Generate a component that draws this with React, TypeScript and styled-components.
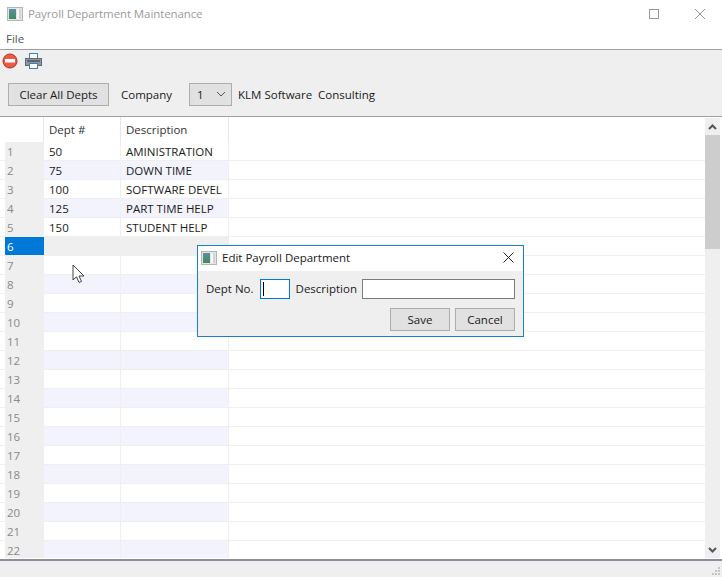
import React from "react";
import styled, { createGlobalStyle } from "styled-components";

const GlobalStyle = createGlobalStyle`
  html, body {
    margin: 0;
    padding: 0;
    background: #fff;
  }
  body {
    font-family: "Open Sans", "Noto Sans", sans-serif;
    font-size: 11.5px;
    color: #1a1a1a;
  }
`;

const Win = styled.div`
  position: relative;
  width: 722px;
  height: 577px;
  display: flex;
  flex-direction: column;
  overflow: hidden;
  background: #fff;
`;

const TitleBar = styled.div`
  height: 30px;
  box-sizing: border-box;
  padding: 0 0 3px 7px;
  display: flex;
  align-items: center;
  gap: 5px;
  color: #9b9b9b;
  flex: none;
`;

const TitleText = styled.span`
  flex: 1;
  letter-spacing: -0.1px;
`;

const WinButtons = styled.div`
  display: flex;
  align-items: center;
  gap: 36px;
  padding-right: 17px;
`;

const MenuBar = styled.div`
  height: 19px;
  padding: 0 0 2px 6px;
  display: flex;
  align-items: center;
  color: #555;
  flex: none;
  box-sizing: border-box;
`;

const Toolbar = styled.div`
  flex: none;
  height: 68px;
  box-sizing: border-box;
  background: #efefef;
  border-top: 1px solid #a0a0a0;
  border-bottom: 1px solid #a0a0a0;
  display: flex;
  flex-direction: column;
`;

const IconRow = styled.div`
  height: 22px;
  display: flex;
  align-items: center;
  gap: 7px;
  padding-left: 2px;
`;

const FormRow = styled.div`
  display: flex;
  align-items: center;
  height: 24px;
  margin-top: 10px;
  padding-left: 8px;
`;

const Button = styled.button<{ $w: number }>`
  width: ${(p) => p.$w}px;
  height: 23px;
  box-sizing: border-box;
  border: 1px solid #adadad;
  background: #e1e1e1;
  font: inherit;
  color: #1a1a1a;
  padding: 0;
`;

const Label = styled.span<{ $gap: number }>`
  margin-left: ${(p) => p.$gap}px;
`;

const Combo = styled.div`
  width: 43px;
  height: 23px;
  margin-left: 17px;
  box-sizing: border-box;
  border: 1px solid #adadad;
  background: #e1e1e1;
  display: flex;
  align-items: center;
  justify-content: space-between;
  padding: 0 5px 0 7px;
`;

const GridArea = styled.div`
  flex: 1;
  display: flex;
  min-height: 0;
  position: relative;
`;

const Table = styled.div`
  flex: 1;
  min-width: 0;
  margin-bottom: 1px;
  overflow: hidden;
`;

const HeaderRow = styled.div`
  display: flex;
  height: 25px;
  padding-left: 5px;
`;

const HeaderCell = styled.div<{ $w: number }>`
  width: ${(p) => p.$w}px;
  box-sizing: border-box;
  border-right: 1px solid #e6e6e6;
  padding-left: 5px;
  display: flex;
  align-items: center;
  color: #333;
`;

const Row = styled.div`
  display: flex;
  height: 19px;
  box-sizing: border-box;
  border-bottom: 1px solid #efefef;
  padding-left: 5px;
`;

const RowHead = styled.div<{ $active: boolean }>`
  width: 39px;
  padding-left: 2px;
  box-sizing: border-box;
  background: ${(p) => (p.$active ? "#0078d7" : "#efefef")};
  color: ${(p) => (p.$active ? "#fff" : "#8a8a8a")};
  display: flex;
  align-items: center;
`;

const Cell = styled.div<{ $w: number; $bg: string }>`
  width: ${(p) => p.$w}px;
  box-sizing: border-box;
  background: ${(p) => p.$bg};
  border-right: 1px solid #efefef;
  padding-left: 5px;
  display: flex;
  align-items: center;
  white-space: nowrap;
  overflow: hidden;
  color: #1a1a1a;
`;

const Scrollbar = styled.div`
  width: 15px;
  margin: 1px 2px 1px 0;
  flex: none;
  background: #efefef;
  display: flex;
  flex-direction: column;
`;

const ScrollBtn = styled.div`
  height: 17px;
  flex: none;
  display: flex;
  align-items: center;
  justify-content: center;
`;

const Track = styled.div`
  flex: 1;
`;

const Thumb = styled.div`
  height: 114px;
  background: #cdcdcd;
`;

const StatusBar = styled.div`
  flex: none;
  height: 18px;
  box-sizing: border-box;
  background: #efefef;
  border-top: 2px solid #8f8c9e;
  display: flex;
  justify-content: flex-end;
  align-items: flex-end;
`;

const Pointer = styled.svg`
  position: absolute;
  left: 72px;
  top: 264px;
`;

const Dialog = styled.div`
  position: absolute;
  left: 197px;
  top: 245px;
  width: 327px;
  height: 92px;
  box-sizing: border-box;
  border: 1px solid #1b7fcc;
  background: #efefef;
  display: flex;
  flex-direction: column;
`;

const DialogTitle = styled.div`
  height: 25px;
  box-sizing: border-box;
  padding: 0 0 2px 3px;
  background: #fff;
  display: flex;
  align-items: center;
  gap: 5px;
  color: #1a1a1a;
`;

const DialogTitleText = styled.span`
  flex: 1;
`;

const CloseBtn = styled.svg`
  margin-right: 9px;
`;

const FieldRow = styled.div`
  display: flex;
  align-items: center;
  height: 20px;
  margin-top: 8px;
  padding-left: 8px;
`;

const FieldLabel = styled.span<{ $gap: number }>`
  margin: 0 0 2px ${(p) => p.$gap}px;
`;

const Input = styled.div<{ $w: number; $focus?: boolean; $gap: number }>`
  width: ${(p) => p.$w}px;
  height: 20px;
  margin-left: ${(p) => p.$gap}px;
  box-sizing: border-box;
  background: #fff;
  border: 1px solid ${(p) => (p.$focus ? "#0078d7" : "#7a7a7a")};
  display: flex;
  align-items: center;
  padding-left: 2px;
`;

const Caret = styled.div`
  width: 1px;
  height: 14px;
  background: #000;
`;

const DialogActions = styled.div`
  display: flex;
  justify-content: flex-end;
  gap: 5px;
  margin-top: 9px;
  padding-right: 8px;
`;

const AppIcon: React.FC = () => (
  <svg width="16" height="16" viewBox="0 0 16 16">
    <defs>
      <linearGradient id="appfill" x1="0" y1="0" x2="0" y2="1">
        <stop offset="0" stopColor="#5b8fa8" />
        <stop offset="1" stopColor="#3f8a5c" />
      </linearGradient>
    </defs>
    <rect x="0.5" y="1.5" width="15" height="13" fill="#e4e4e4" stroke="#b5b5b5" />
    <rect x="2" y="3" width="7" height="10" fill="url(#appfill)" />
    <rect x="10" y="3" width="2" height="10" fill="#f7f7f7" />
    <rect x="12" y="3" width="2" height="10" fill="#cfd4d8" />
  </svg>
);

const StopIcon: React.FC = () => (
  <svg width="16" height="16" viewBox="0 0 16 16">
    <circle cx="8" cy="8" r="7" fill="#ea5a45" stroke="#b5301f" />
    <rect x="3" y="6" width="10" height="3.5" fill="#fff" />
  </svg>
);

const PrintIcon: React.FC = () => (
  <svg width="17" height="16" viewBox="0 0 17 16">
    <rect x="4.5" y="0.5" width="8" height="5" fill="#fff" stroke="#3f7fb5" />
    <rect x="0.5" y="5.5" width="16" height="7" fill="#8d98a3" stroke="#5f6a75" />
    <rect x="2" y="7" width="13" height="2" fill="#5c6670" />
    <rect x="4.5" y="10.5" width="8" height="5" fill="#fff" stroke="#3f7fb5" />
  </svg>
);

const departments = [
  { no: "50", desc: "AMINISTRATION" },
  { no: "75", desc: "DOWN TIME" },
  { no: "100", desc: "SOFTWARE DEVEL" },
  { no: "125", desc: "PART TIME HELP" },
  { no: "150", desc: "STUDENT HELP" },
];

const rows = Array.from({ length: 22 }, (_, i) => i + 1);

const cellBg = (n: number) => {
  if (n === 6) return "#efefef";
  return n % 2 === 0 ? "#f2f3fd" : "#fff";
};

const App: React.FC = () => {
  return (
    <Win>
      <GlobalStyle />
      <TitleBar>
        <AppIcon />
        <TitleText>Payroll Department Maintenance</TitleText>
        <WinButtons>
          <svg width="10" height="10" viewBox="0 0 10 10">
            <rect x="0.5" y="0.5" width="9" height="9" fill="none" stroke="#999" />
          </svg>
          <svg width="10" height="10" viewBox="0 0 10 10">
            <path d="M0 0L10 10M10 0L0 10" stroke="#999" fill="none" />
          </svg>
        </WinButtons>
      </TitleBar>
      <MenuBar>File</MenuBar>
      <Toolbar>
        <IconRow>
          <StopIcon />
          <PrintIcon />
        </IconRow>
        <FormRow>
          <Button $w={101}>Clear All Depts</Button>
          <Label $gap={12}>Company</Label>
          <Combo>
            1
            <svg width="10" height="6" viewBox="0 0 10 6">
              <path d="M1 1L5 5L9 1" stroke="#555" fill="none" />
            </svg>
          </Combo>
          <Label $gap={6}>KLM Software&nbsp; Consulting</Label>
        </FormRow>
      </Toolbar>
      <GridArea>
        <Table>
          <HeaderRow>
            <HeaderCell $w={39} />
            <HeaderCell $w={77}>Dept #</HeaderCell>
            <HeaderCell $w={108}>Description</HeaderCell>
          </HeaderRow>
          {rows.map((n) => {
            const dept = departments[n - 1];
            const bg = cellBg(n);
            return (
              <Row key={n}>
                <RowHead $active={n === 6}>{n}</RowHead>
                <Cell $w={77} $bg={bg}>{dept?.no}</Cell>
                <Cell $w={108} $bg={bg}>{dept?.desc}</Cell>
              </Row>
            );
          })}
        </Table>
        <Scrollbar>
          <ScrollBtn>
            <svg width="9" height="6" viewBox="0 0 9 6">
              <path d="M1 5L4.5 1.5L8 5" stroke="#555" strokeWidth="2" fill="none" />
            </svg>
          </ScrollBtn>
          <Thumb />
          <Track />
          <ScrollBtn>
            <svg width="9" height="6" viewBox="0 0 9 6">
              <path d="M1 1L4.5 4.5L8 1" stroke="#555" strokeWidth="2" fill="none" />
            </svg>
          </ScrollBtn>
        </Scrollbar>
      </GridArea>
      <StatusBar>
        <svg width="12" height="12" viewBox="0 0 12 12">
          <path d="M8 2h2v2H8zM5 5h2v2H5zM8 5h2v2H8zM2 8h2v2H2zM5 8h2v2H5zM8 8h2v2H8z" fill="#c4c4c4" />
        </svg>
      </StatusBar>
      <Pointer width="13" height="20" viewBox="0 0 13 20">
        <path d="M1 1V16L4.5 12.8L7 18.5L9.5 17.5L7 12H12Z" fill="#fff" stroke="#444" />
      </Pointer>
      <Dialog>
        <DialogTitle>
          <AppIcon />
          <DialogTitleText>Edit Payroll Department</DialogTitleText>
          <CloseBtn width="11" height="11" viewBox="0 0 11 11">
            <path d="M0.5 0.5L10.5 10.5M10.5 0.5L0.5 10.5" stroke="#222" fill="none" />
          </CloseBtn>
        </DialogTitle>
        <FieldRow>
          <FieldLabel $gap={0}>Dept No.</FieldLabel>
          <Input $w={30} $gap={6} $focus>
            <Caret />
          </Input>
          <FieldLabel $gap={6}>Description</FieldLabel>
          <Input $w={153} $gap={5} />
        </FieldRow>
        <DialogActions>
          <Button $w={60}>Save</Button>
          <Button $w={60}>Cancel</Button>
        </DialogActions>
      </Dialog>
    </Win>
  );
};

export default App;
